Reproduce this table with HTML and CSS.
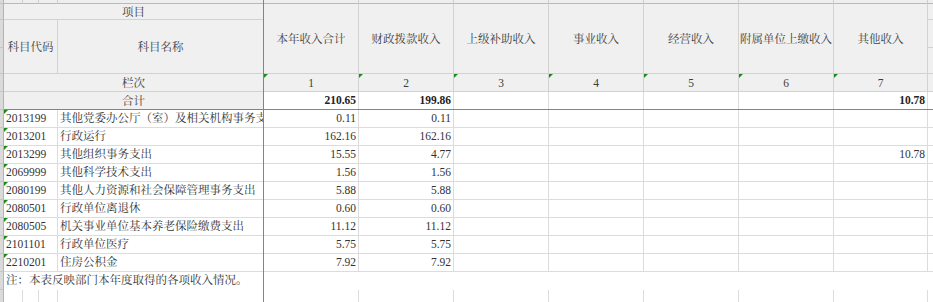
FILE: index.html
```html
<!DOCTYPE html>
<html lang="zh-CN">
<head>
<meta charset="utf-8">
<title>收入总表</title>
<link rel="stylesheet" href="styles.css">
</head>
<body>
<div class="sheet">
  <div class="grid strip">
    <div class="gut"></div><div class="sc"></div><div class="sc"></div><div class="sc"></div><div class="sc"></div>
    <div class="sc"></div><div class="sc"></div><div class="sc"></div><div class="sc"></div><div class="sc"></div><div class="sc"></div><div class="sc"></div><div class="sc"></div>
  </div>
  <div class="grid head">
    <div class="gut r1"></div>
    <div class="hc r1 s4">项目</div>
    <div class="hc r13">本年收入合计</div>
    <div class="hc r13">财政拨款收入</div>
    <div class="hc r13">上级补助收入</div>
    <div class="hc r13">事业收入</div>
    <div class="hc r13">经营收入</div>
    <div class="hc r13">附属单位上缴收入</div>
    <div class="hc r13">其他收入</div>
    <div class="hc r1"></div>

    <div class="gut r2"></div>
    <div class="hc r23 s3">科目代码</div>
    <div class="hc r23">科目名称</div>
    <div class="hc r2"></div>

    <div class="gut r3"></div>
    <div class="hc r3"></div>

    <div class="gut r4"></div>
    <div class="hc r4 s4 low">栏次</div>
    <div class="hc r4 low flag">1</div>
    <div class="hc r4 low flag">2</div>
    <div class="hc r4 low flag">3</div>
    <div class="hc r4 low flag">4</div>
    <div class="hc r4 low flag">5</div>
    <div class="hc r4 low flag">6</div>
    <div class="hc r4 low flag">7</div>
    <div class="hc r4"></div>

    <div class="gut r5"></div>
    <div class="hc r5 s4 total-label">合计</div>
    <div class="bc r5 num bold">210.65</div>
    <div class="bc r5 num bold">199.86</div>
    <div class="bc r5 num"></div>
    <div class="bc r5 num"></div>
    <div class="bc r5 num"></div>
    <div class="bc r5 num"></div>
    <div class="bc r5 num bold">10.78</div>
    <div class="bc r5"></div>
  </div>
  <div class="grid body">
    <div class="gut"></div><div class="bc s3 code flag">2013199</div><div class="bc name">其他党委办公厅（室）及相关机构事务支出</div>
    <div class="bc num">0.11</div><div class="bc num">0.11</div><div class="bc"></div><div class="bc"></div><div class="bc"></div><div class="bc"></div><div class="bc"></div><div class="bc"></div>

    <div class="gut"></div><div class="bc s3 code flag">2013201</div><div class="bc name">行政运行</div>
    <div class="bc num">162.16</div><div class="bc num">162.16</div><div class="bc"></div><div class="bc"></div><div class="bc"></div><div class="bc"></div><div class="bc"></div><div class="bc"></div>

    <div class="gut"></div><div class="bc s3 code flag">2013299</div><div class="bc name">其他组织事务支出</div>
    <div class="bc num">15.55</div><div class="bc num">4.77</div><div class="bc"></div><div class="bc"></div><div class="bc"></div><div class="bc"></div><div class="bc num">10.78</div><div class="bc"></div>

    <div class="gut"></div><div class="bc s3 code flag">2069999</div><div class="bc name">其他科学技术支出</div>
    <div class="bc num">1.56</div><div class="bc num">1.56</div><div class="bc"></div><div class="bc"></div><div class="bc"></div><div class="bc"></div><div class="bc"></div><div class="bc"></div>

    <div class="gut"></div><div class="bc s3 code flag">2080199</div><div class="bc name">其他人力资源和社会保障管理事务支出</div>
    <div class="bc num">5.88</div><div class="bc num">5.88</div><div class="bc"></div><div class="bc"></div><div class="bc"></div><div class="bc"></div><div class="bc"></div><div class="bc"></div>

    <div class="gut"></div><div class="bc s3 code flag">2080501</div><div class="bc name">行政单位离退休</div>
    <div class="bc num">0.60</div><div class="bc num">0.60</div><div class="bc"></div><div class="bc"></div><div class="bc"></div><div class="bc"></div><div class="bc"></div><div class="bc"></div>

    <div class="gut"></div><div class="bc s3 code flag">2080505</div><div class="bc name">机关事业单位基本养老保险缴费支出</div>
    <div class="bc num">11.12</div><div class="bc num">11.12</div><div class="bc"></div><div class="bc"></div><div class="bc"></div><div class="bc"></div><div class="bc"></div><div class="bc"></div>

    <div class="gut"></div><div class="bc s3 code flag">2101101</div><div class="bc name">行政单位医疗</div>
    <div class="bc num">5.75</div><div class="bc num">5.75</div><div class="bc"></div><div class="bc"></div><div class="bc"></div><div class="bc"></div><div class="bc"></div><div class="bc"></div>

    <div class="gut"></div><div class="bc s3 code flag">2210201</div><div class="bc name">住房公积金</div>
    <div class="bc num">7.92</div><div class="bc num">7.92</div><div class="bc"></div><div class="bc"></div><div class="bc"></div><div class="bc"></div><div class="bc"></div><div class="bc"></div>

    <div class="gut"></div><div class="note s12">注：本表反映部门本年度取得的各项收入情况。</div>

    <div class="gut"></div><div class="ec"></div><div class="ec"></div><div class="ec"></div><div class="ec"></div>
    <div class="ec"></div><div class="ec"></div><div class="ec"></div><div class="ec"></div><div class="ec"></div><div class="ec"></div><div class="ec"></div><div class="ec"></div>
  </div>
  <div class="freeze-v"></div>
  <div class="freeze-h"></div>
</div>
</body>
</html>
```

FILE: styles.css
```css
html, body {
  margin: 0;
  padding: 0;
  background: #ffffff;
}

body {
  width: 933px;
  height: 302px;
  overflow: hidden;
  font-family: "Liberation Serif", "Noto Serif CJK SC", "Noto Sans CJK SC", serif;
  font-size: 11.5px;
  color: #333333;
}

.sheet {
  position: relative;
  width: 933px;
  height: 302px;
  overflow: hidden;
}

.grid {
  display: grid;
  grid-template-columns: 4px 19px 16px 19px 206px 95px 95px 95px 95px 95px 95px 94px 40px;
}

.grid > div {
  box-sizing: border-box;
  min-width: 0;
}

/* top strip (partial row above) */
.strip {
  grid-template-rows: 4px;
}
.sc {
  background: #eeeeee;
  border-right: 1px solid #cfcfcf;
  border-bottom: 1px solid #b9b9b9;
}

/* left gutter */
.gut {
  background: #dadada;
  border-right: 1px solid #b4b4b4;
  border-bottom: 1px solid #c4c4c4;
}

/* header */
.head {
  grid-template-rows: 16px 28px 26px 18px 18px;
}
.r1 { grid-row: 1; }
.r2 { grid-row: 2; }
.r3 { grid-row: 3; }
.r4 { grid-row: 4; }
.r5 { grid-row: 5; }
.r13 { grid-row: 1 / 4; }
.r23 { grid-row: 2 / 4; }
.s3 { grid-column: span 3; }
.s4 { grid-column: span 4; }
.s12 { grid-column: span 12; }

.hc {
  background: #f0f0f0;
  border-right: 1px solid #d2d2d2;
  border-bottom: 1px solid #d2d2d2;
  display: flex;
  align-items: center;
  justify-content: center;
  color: #3d3d3d;
  white-space: nowrap;
  overflow: hidden;
  line-height: 14px;
}
.hc.low {
  align-items: flex-end;
  padding-bottom: 1px;
}
.total-label {
  padding-top: 1px;
}

/* body cells */
.body {
  grid-auto-rows: 18px;
}
.bc {
  border-right: 1px solid #dcdcdc;
  border-bottom: 1px solid #dcdcdc;
  line-height: 17px;
  white-space: nowrap;
  overflow: hidden;
}
.code {
  padding-left: 2px;
}
.name {
  padding-left: 2px;
}
.num {
  text-align: right;
  padding-right: 2px;
}
.bold {
  font-weight: bold;
  color: #222222;
}

.note {
  line-height: 17px;
  padding-left: 2px;
  white-space: nowrap;
  background: #ffffff;
}
.ec {
  border-right: 1px solid #dcdcdc;
}

/* error indicator triangles */
.flag {
  position: relative;
}
.flag::before {
  content: "";
  position: absolute;
  left: 0;
  top: 0;
  width: 0;
  height: 0;
  border-top: 4px solid #1b8a1b;
  border-right: 4px solid transparent;
}

/* frozen pane lines */
.freeze-v {
  position: absolute;
  left: 263px;
  top: 0;
  width: 1px;
  height: 302px;
  background: #4faa4f;
}
.freeze-h {
  position: absolute;
  left: 4px;
  top: 109px;
  width: 929px;
  height: 1px;
  background: #4faa4f;
}
```
